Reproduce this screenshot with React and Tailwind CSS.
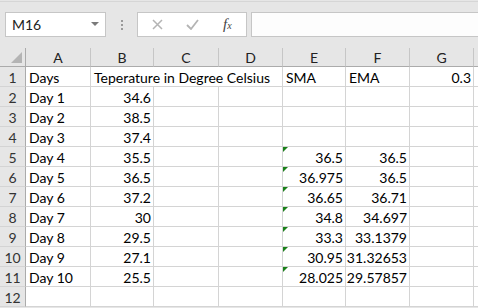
import React from "react";

const cols = ["A", "B", "C", "D", "E", "F", "G", ""];

const rows = [
  ["Days", "Teperature in Degree Celsius", "", "", "SMA", "EMA", "0.3"],
  ["Day 1", "34.6"],
  ["Day 2", "38.5"],
  ["Day 3", "37.4"],
  ["Day 4", "35.5", "", "", "36.5", "36.5"],
  ["Day 5", "36.5", "", "", "36.975", "36.5"],
  ["Day 6", "37.2", "", "", "36.65", "36.71"],
  ["Day 7", "30", "", "", "34.8", "34.697"],
  ["Day 8", "29.5", "", "", "33.3", "33.1379"],
  ["Day 9", "27.1", "", "", "30.95", "31.32653"],
  ["Day 10", "25.5", "", "", "28.025", "29.57857"],
  [],
];

const isNum = (v) => v !== "" && !isNaN(Number(v));

function Cell({ value, flag, last }) {
  return (
    <div
      className={
        "relative h-[20px] border-b border-[#d4d4d4] flex items-end pb-[1px] whitespace-nowrap " +
        (last ? "" : "border-r ") +
        (isNum(value) ? "justify-end pr-[2px]" : "pl-[3px]")
      }
    >
      {flag && (
        <span className="absolute left-0 top-0 w-0 h-0 border-t-[5px] border-t-[#1a7f1a] border-r-[5px] border-r-transparent" />
      )}
      {value}
    </div>
  );
}

export default function App() {
  return (
    <div
      className="w-[478px] h-[308px] overflow-hidden bg-[#e6e6e6] text-black"
      style={{ fontFamily: "Lato, 'Open Sans', sans-serif" }}
    >
      <div className="h-px" />
      <div className="h-px bg-[#d6d6d6]" />
      {/* formula bar */}
      <div className="flex items-center mt-[10px] h-[25px]">
        <div className="ml-[5px] w-[101px] h-[25px] border border-[#c6c6c6] bg-white flex items-center pl-[6px] pr-[6px] text-[14px] text-[#222]">
          <span className="flex-1">M16</span>
          <svg width="8" height="5" viewBox="0 0 8 5">
            <polygon points="0,0 8,0 4,4" fill="#7a7a7a" />
          </svg>
        </div>
        <div className="w-[31px] flex flex-col items-center gap-[2px]">
          <span className="w-[2px] h-[2px] bg-[#9a9a9a]" />
          <span className="w-[2px] h-[2px] bg-[#9a9a9a]" />
          <span className="w-[2px] h-[2px] bg-[#9a9a9a]" />
        </div>
        <div className="w-[110px] h-[25px] border border-[#c6c6c6] bg-white flex items-center">
          <svg className="ml-[14px]" width="11" height="11" viewBox="0 0 11 11">
            <path d="M1 1 L10 10 M10 1 L1 10" stroke="#b4b4b4" strokeWidth="1.5" />
          </svg>
          <svg className="ml-[23px]" width="13" height="11" viewBox="0 0 13 11">
            <path d="M1 6 L5 10 L12 1" stroke="#b4b4b4" strokeWidth="1.8" fill="none" />
          </svg>
          <span
            className="ml-[24px] italic text-[15px] text-[#444] leading-none"
            style={{ fontFamily: "'Liberation Serif', serif" }}
          >
            f<span className="text-[10px]">x</span>
          </span>
        </div>
        <div className="ml-[4px] flex-1 h-[25px] border border-[#c6c6c6] border-r-0 bg-[#fdfdfd]" />
      </div>

      {/* sheet */}
      <div className="mt-[11px] grid grid-cols-[26px_65px_63px_65px_64px_63px_64px_64px_64px] text-[14px] leading-none bg-white">
        {/* header row */}
        <div className="relative h-[19px] bg-[#e6e6e6] border-r border-b border-[#ababab]">
          <svg className="absolute left-[11px] top-[4px]" width="12" height="12" viewBox="0 0 12 12">
            <polygon points="0,11 11,11 11,0" fill="#b4b4b4" />
          </svg>
        </div>
        {cols.map((c, i) => (
          <div
            key={i}
            className="h-[19px] bg-[#e6e6e6] border-r border-r-[#c6c6c6] border-b border-b-[#ababab] flex items-end justify-center pb-[1px] text-[#222]"
          >
            {c}
          </div>
        ))}

        {rows.map((r, ri) => (
          <React.Fragment key={ri}>
            <div className="h-[20px] bg-[#e6e6e6] border-r border-r-[#ababab] border-b border-b-[#d4d4d4] flex items-end justify-center pb-[1px] text-[#333]">
              {ri + 1}
            </div>
            {ri === 0 ? (
              <>
                <Cell value={r[0]} />
                <div className="col-span-3 h-[20px] border-b border-r border-[#d4d4d4] flex items-end pb-[1px] pl-[3px] whitespace-nowrap">
                  {r[1]}
                </div>
                <Cell value={r[4]} />
                <Cell value={r[5]} />
                <Cell value={r[6]} />
                <Cell value="" />
              </>
            ) : (
              Array.from({ length: 8 }).map((_, ci) => (
                <Cell
                  key={ci}
                  value={r[ci] || ""}
                  flag={ci === 4 && ri >= 4 && ri <= 10}
                />
              ))
            )}
          </React.Fragment>
        ))}
      </div>
    </div>
  );
}
